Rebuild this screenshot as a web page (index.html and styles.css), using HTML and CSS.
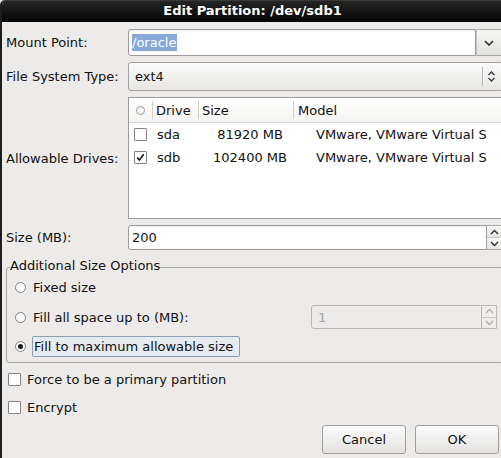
FILE: index.html
```html
<!DOCTYPE html>
<html>
<head>
<meta charset="utf-8">
<link rel="stylesheet" href="styles.css">
</head>
<body>
<div class="window">
  <div class="titlebar">Edit Partition: /dev/sdb1</div>
  <div class="content">
    <div class="form">
      <div class="label">Mount Point:</div>
      <div class="combo-entry">
        <div class="entry"><span class="sel">/oracle</span></div>
        <div class="dropbtn">
          <svg width="10" height="6" viewBox="0 0 10 6"><path d="M1 1 L5 5 L9 1" fill="none" stroke="#2e2e2e" stroke-width="1.6"/></svg>
        </div>
      </div>

      <div class="label">File System Type:</div>
      <div class="combo">
        <span class="combo-text">ext4</span>
        <span class="combo-sep"></span>
        <svg class="updown" width="9" height="13" viewBox="0 0 9 13"><path d="M1.5 5 L4.5 2 L7.5 5 M1.5 8 L4.5 11 L7.5 8" fill="none" stroke="#3a3a3a" stroke-width="1.3"/></svg>
      </div>

      <div class="label">Allowable Drives:</div>
      <div class="tree">
        <div class="trow head">
          <div class="cell c0"><span class="hcircle"></span></div>
          <div class="cell c1 hsep">Drive</div>
          <div class="cell c2 hsep">Size</div>
          <div class="cell c3 hsep">Model</div>
        </div>
        <div class="trow">
          <div class="cell c0"><span class="check"></span></div>
          <div class="cell c1">sda</div>
          <div class="cell c2 num">81920 MB</div>
          <div class="cell c3 model">VMware, VMware Virtual S</div>
        </div>
        <div class="trow">
          <div class="cell c0"><span class="check"><svg width="11" height="11" viewBox="0 0 11 11"><path d="M2.2 5.6 L4.4 8 L8.8 2.2" fill="none" stroke="#1a1a1a" stroke-width="1.6"/></svg></span></div>
          <div class="cell c1">sdb</div>
          <div class="cell c2 num">102400 MB</div>
          <div class="cell c3 model">VMware, VMware Virtual S</div>
        </div>
      </div>

      <div class="label">Size (MB):</div>
      <div class="spin">
        <div class="spin-entry">200</div>
        <div class="spin-btns">
          <div class="spin-btn"><svg width="9" height="6" viewBox="0 0 9 6"><path d="M1 5 L4.5 1.5 L8 5" fill="none" stroke="#2e2e2e" stroke-width="1.4"/></svg></div>
          <div class="spin-btn"><svg width="9" height="6" viewBox="0 0 9 6"><path d="M1 1 L4.5 4.5 L8 1" fill="none" stroke="#2e2e2e" stroke-width="1.4"/></svg></div>
        </div>
      </div>
    </div>

    <fieldset class="frame">
      <legend class="frame-title">Additional Size Options</legend>
      <div class="opt opt1">
        <span class="radio"></span>
        <span class="opt-text">Fixed size</span>
      </div>
      <div class="opt opt2">
        <span class="radio"></span>
        <span class="opt-text">Fill all space up to (MB):</span>
        <div class="spin spin-disabled">
          <div class="spin-entry">1</div>
          <div class="spin-btns">
            <div class="spin-btn"><svg width="9" height="6" viewBox="0 0 9 6"><path d="M1 5 L4.5 1.5 L8 5" fill="none" stroke="#b0b0b0" stroke-width="1.3"/></svg></div>
            <div class="spin-btn"><svg width="9" height="6" viewBox="0 0 9 6"><path d="M1 1 L4.5 4.5 L8 1" fill="none" stroke="#b0b0b0" stroke-width="1.3"/></svg></div>
          </div>
        </div>
      </div>
      <div class="opt opt3">
        <span class="radio checked"></span>
        <span class="opt-text focus">Fill to maximum allowable size</span>
      </div>
    </fieldset>

    <div class="cb-row cb1">
      <span class="check"></span>
      <span>Force to be a primary partition</span>
    </div>
    <div class="cb-row cb2">
      <span class="check"></span>
      <span>Encrypt</span>
    </div>

    <div class="buttons">
      <div class="btn">Cancel</div>
      <div class="btn">OK</div>
    </div>
  </div>
</div>
</body>
</html>
```

FILE: styles.css
```css
* { box-sizing: border-box; }
html, body {
  margin: 0;
  padding: 0;
  width: 501px;
  height: 458px;
  overflow: hidden;
  background: #ecebe9;
}
body {
  font-family: "DejaVu Sans", "Liberation Sans", sans-serif;
  font-size: 13px;
  color: #111;
}
.window {
  width: 504px;
  height: 458px;
  background: #ecebe9;
  border-left: 2px solid #1e1e1e;
  border-top-left-radius: 5px;
  overflow: hidden;
}
.titlebar {
  height: 22px;
  line-height: 22px;
  background: linear-gradient(#4a4a4a 0, #262626 1px, #141414 50%, #050505 100%);
  color: #fff;
  font-weight: bold;
  text-align: center;
  padding-right: 1px;
}
.content {
  padding: 7px 1px 0 4px;
}
.form {
  display: grid;
  grid-template-columns: 122px 375px;
  grid-template-rows: 27px 29px 122px 25px;
  row-gap: 6px;
}
.label {
  display: flex;
  align-items: center;
}
.combo-entry {
  display: flex;
}
.entry {
  flex: 1;
  background: #fff;
  border: 1px solid #9d9c9a;
  border-radius: 3px 0 0 3px;
  box-shadow: inset 0 1px 1px rgba(0,0,0,0.08);
  display: flex;
  align-items: center;
  padding-left: 3px;
}
.sel {
  background: #86a9d9;
  color: #fff;
  line-height: 17px;
  padding-right: 1px;
}
.dropbtn {
  width: 27px;
  border: 1px solid #a8a7a5;
  border-left: 1px solid #c4c3c1;
  background: linear-gradient(#f6f6f5, #e3e2e0);
  display: flex;
  align-items: center;
  justify-content: center;
  padding-right: 2px;
}
.combo {
  display: flex;
  align-items: center;
  border: 1px solid #a3a2a0;
  border-radius: 3px;
  background: linear-gradient(#fbfbfb, #e7e6e4);
  padding-left: 6px;
}
.combo-text { flex: 1; }
.combo-sep {
  width: 1px;
  height: 19px;
  background: #b8b7b5;
  box-shadow: 1px 0 0 #fafafa;
}
.updown {
  margin: 0 6px 0 4px;
}
.tree {
  border: 1px solid #9d9c9a;
  background: #fff;
  overflow: hidden;
}
.trow {
  display: grid;
  grid-template-columns: 23px 46px 95px 220px;
  height: 23px;
  white-space: nowrap;
}
.trow.head {
  height: 25px;
  border-bottom: 1px solid #d6d5d3;
  background: linear-gradient(#ffffff, #f4f4f3);
}
.cell {
  display: flex;
  align-items: center;
  overflow: hidden;
}
.c0 { justify-content: center; }
.c1 { padding-left: 5px; }
.head .cell { padding-left: 3px; }
.head .c0 { padding-left: 0; }
.head .c3 { padding-left: 4px; }
.hsep { border-left: 1px solid #cfcecc; margin: 3px 0; }
.num { justify-content: center; padding-left: 9px; }
.model { padding-left: 23px; }
.hcircle {
  width: 9px;
  height: 9px;
  border: 1px solid #9a9a9a;
  border-radius: 50%;
  background: linear-gradient(#f4f4f4, #fff);
}
.check {
  width: 13px;
  height: 13px;
  border: 1px solid #858483;
  background: #fff;
  border-radius: 1px;
  display: flex;
  align-items: center;
  justify-content: center;
  flex: none;
}
.spin {
  display: flex;
}
.spin-entry {
  flex: 1;
  background: #fff;
  border: 1px solid #9d9c9a;
  border-radius: 3px 0 0 3px;
  box-shadow: inset 0 1px 1px rgba(0,0,0,0.08);
  display: flex;
  align-items: center;
  padding-left: 3px;
}
.spin-btns {
  width: 16px;
  display: flex;
  flex-direction: column;
  border: 1px solid #a8a7a5;
  border-left: 0;
}
.spin-btn {
  flex: 1;
  background: linear-gradient(#f8f8f7, #e6e5e3);
  display: flex;
  align-items: center;
  justify-content: center;
}
.spin-btn + .spin-btn { border-top: 1px solid #c9c8c6; }
.frame {
  margin: 8px 0 0 0;
  padding: 0 5px 5px 0;
  min-width: 0;
  border: 1px solid #a6a5a3;
  border-radius: 3px;
}
.frame-title {
  margin-left: 3px;
  padding: 0 0 4px 0;
  line-height: 15px;
}
.opt {
  display: flex;
  align-items: center;
  padding-left: 8px;
}
.opt1 { height: 20px; }
.opt2 { height: 24px; margin-top: 8px; }
.opt3 { height: 21px; margin-top: 7px; }
.radio {
  width: 11px;
  height: 11px;
  border: 1px solid #858483;
  border-radius: 50%;
  background: linear-gradient(#f4f4f4, #fff);
  flex: none;
  margin-right: 7px;
  display: flex;
  align-items: center;
  justify-content: center;
}
.radio.checked::after {
  content: "";
  width: 5px;
  height: 5px;
  border-radius: 50%;
  background: #1a1a1a;
}
.opt3 .radio { margin-right: 6px; }
.focus {
  border: 1px solid #8d9db3;
  border-radius: 2px;
  background: #e6ebf2;
  height: 21px;
  line-height: 19px;
  padding: 0 1px 0 1px;
  width: 208px;
}
.spin-disabled {
  margin-left: auto;
  width: 186px;
  height: 24px;
}
.spin-disabled .spin-entry {
  background: #ecebe9;
  border-color: #b9b8b6;
  color: #a3a2a0;
  box-shadow: none;
  padding-left: 6px;
}
.spin-disabled .spin-btns {
  width: 15px;
  border-color: #b9b8b6;
}
.spin-disabled .spin-btn {
  background: #efeeec;
}
.cb-row {
  display: flex;
  align-items: center;
  height: 20px;
  padding-left: 2px;
  gap: 6px;
}
.cb1 { margin-top: 6px; }
.cb2 { margin-top: 8px; }
.buttons {
  display: flex;
  justify-content: flex-end;
  gap: 9px;
  margin-top: 8px;
  padding-right: 4px;
}
.btn {
  width: 84px;
  height: 29px;
  border: 1px solid #9f9e9c;
  border-radius: 3px;
  background: linear-gradient(#fbfbfb, #e4e3e1);
  display: flex;
  align-items: center;
  justify-content: center;
}
```
